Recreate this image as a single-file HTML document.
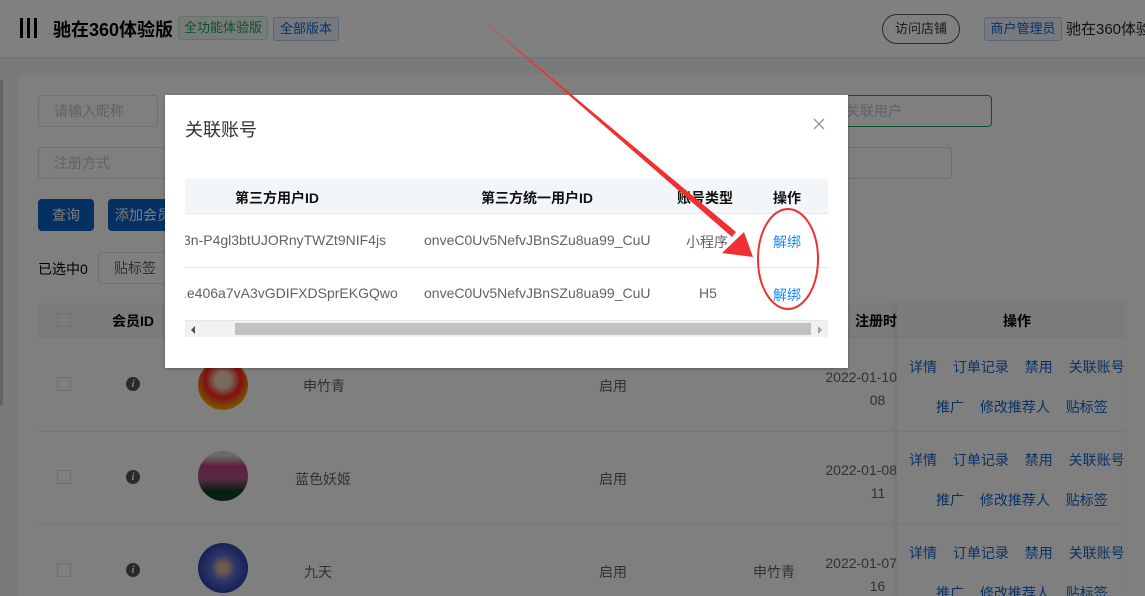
<!DOCTYPE html>
<html style="width:1145px;height:596px;overflow:hidden"><head><meta charset="utf-8">
<style>
*{margin:0;padding:0;box-sizing:border-box}
body{width:1145px;height:596px;overflow:hidden;position:relative;background:#787a7b;font-family:"Liberation Sans","Noto Sans CJK SC",sans-serif;font-size:14px;color:#303133}
.abs{position:absolute}
.hdr{left:0;top:0;width:1145px;height:58px;background:#808080;border-bottom:1px solid #737373}
.card{left:18px;top:75px;width:1127px;height:521px;background:#7f7f7f}
.inp{border:1px solid #6e6f73;border-radius:4px;color:#606266;font-size:14px;padding-left:15px}
.btn{background:#053062;color:#7f7f7f;border-radius:4px;text-align:center;line-height:32px}
.blue{color:#0a3264}
.modal{left:165px;top:95px;width:683px;height:273px;background:#fff;box-shadow:0 1px 3px rgba(0,0,0,.3)}
.mt{position:absolute;overflow:hidden;left:20px;top:84px;width:643px;height:158px;color:#606266}
.cell{position:absolute;white-space:nowrap;text-align:center}
.nw{white-space:nowrap}
</style></head><body>
<div class="abs hdr"></div>
<div class="abs" style="left:20px;top:18px;width:3px;height:20px;background:#000"></div>
<div class="abs" style="left:27px;top:18px;width:3px;height:20px;background:#000"></div>
<div class="abs" style="left:34px;top:18px;width:3px;height:20px;background:#000"></div>
<div class="abs nw" style="left:53px;top:16px;font-size:18px;font-weight:bold;color:#000">驰在360体验版</div>
<div class="abs" style="left:178px;top:16px;width:90px;height:24px;border:1px solid #617368;background:#777c79;color:#0c502c;border-radius:3px;font-size:13px;text-align:center;line-height:22px">全功能体验版</div>
<div class="abs" style="left:273px;top:17px;width:66px;height:24px;border:1px solid #596878;background:#767a7e;color:#0a3264;border-radius:3px;font-size:13px;text-align:center;line-height:22px">全部版本</div>
<div class="abs" style="left:882px;top:14px;width:78px;height:30px;border:1px solid #2a2a2a;border-radius:15px;text-align:center;line-height:28px;font-size:13px;color:#1a1a1a">访问店铺</div>
<div class="abs" style="left:984px;top:17px;width:78px;height:24px;border:1px solid #596878;background:#767a7e;color:#0a3264;border-radius:3px;font-size:13px;text-align:center;line-height:22px">商户管理员</div>
<div class="abs nw" style="left:1066px;top:18px;font-size:15px;color:#111">驰在360体验版</div>
<div class="abs" style="left:0;top:80px;width:3px;height:325px;background:#646464"></div>
<div class="abs card"></div>
<div class="abs inp" style="left:38px;top:95px;width:120px;height:32px;line-height:30px">请输入昵称</div>
<div class="abs inp" style="left:835px;top:95px;width:157px;height:32px;line-height:30px;border-color:#0c502c;padding-left:10px">关联用户</div>
<div class="abs inp" style="left:38px;top:147px;width:130px;height:32px;line-height:30px">注册方式</div>
<div class="abs inp" style="left:835px;top:147px;width:117px;height:32px"></div>
<div class="abs btn" style="left:38px;top:199px;width:56px;height:32px">查询</div>
<div class="abs btn" style="left:108px;top:199px;width:70px;height:32px">添加会员</div>
<div class="abs" style="left:38px;top:259px;color:#000">已选中0</div>
<div class="abs inp" style="left:98px;top:252px;width:80px;height:32px;line-height:30px;color:#303133">贴标签</div>
<div class="abs" style="left:38px;top:303px;width:1088px;height:35px;background:#7a7b7d;border-bottom:1px solid #75777a"></div>
<div class="abs" style="left:57px;top:313px;width:14px;height:14px;border:1px solid #6e6f73"></div>
<div class="abs" style="left:112px;top:311px;font-weight:bold;color:#000">会员ID</div>
<div class="abs" style="left:855px;top:311px;font-weight:bold;color:#000">注册时</div>
<div class="abs" style="left:897px;top:303px;width:229px;height:293px;background:#7f7f7f;box-shadow:-2px 0 4px rgba(0,0,0,.08)"></div>
<div class="abs" style="left:897px;top:303px;width:229px;height:35px;background:#7a7b7d;border-bottom:1px solid #75777a"></div>
<div class="abs" style="left:1003px;top:311px;font-weight:bold;color:#000">操作</div>

<div class="abs" style="left:38px;top:431px;width:1088px;height:1px;background:#75777a"></div>
<div class="abs" style="left:38px;top:524px;width:1088px;height:1px;background:#75777a"></div>

<div class="abs" style="left:57px;top:377px;width:14px;height:14px;border:1px solid #6e6f73"></div>
<div class="abs" style="left:57px;top:470px;width:14px;height:14px;border:1px solid #6e6f73"></div>
<div class="abs" style="left:57px;top:563px;width:14px;height:14px;border:1px solid #6e6f73"></div>
<div class="abs" style="left:126px;top:377px;width:14px;height:14px;border-radius:50%;background:#2a2a2a;color:#808080;font:italic bold 11px 'Liberation Serif',serif;text-align:center;line-height:14px">i</div>
<div class="abs" style="left:126px;top:470px;width:14px;height:14px;border-radius:50%;background:#2a2a2a;color:#808080;font:italic bold 11px 'Liberation Serif',serif;text-align:center;line-height:14px">i</div>
<div class="abs" style="left:126px;top:563px;width:14px;height:14px;border-radius:50%;background:#2a2a2a;color:#808080;font:italic bold 11px 'Liberation Serif',serif;text-align:center;line-height:14px">i</div>
<div class="abs" style="left:198px;top:360px;width:50px;height:50px;border-radius:50%;background:radial-gradient(circle at 50% 40%,#7a6a58 20%,#801010 45%,#7a5800 75%)"></div>
<div class="abs" style="left:198px;top:451px;width:50px;height:50px;border-radius:50%;background:linear-gradient(#6a6a6a 10%,#602040 30%,#582848 55%,#082010 80%)"></div>
<div class="abs" style="left:198px;top:543px;width:50px;height:50px;border-radius:50%;background:radial-gradient(circle,#705a50 12%,#303868 35%,#101850 80%)"></div>
<div class="abs" style="left:303px;top:376px">申竹青</div>
<div class="abs" style="left:295px;top:469px">蓝色妖姬</div>
<div class="abs" style="left:304px;top:562px">九天</div>
<div class="abs" style="left:599px;top:376px">启用</div>
<div class="abs" style="left:599px;top:469px">启用</div>
<div class="abs" style="left:599px;top:562px">启用</div>
<div class="abs" style="left:753px;top:562px">申竹青</div>
<div class="abs nw" style="left:797px;top:366px;text-align:right;width:100px;line-height:23px">2022-01-10<br>08&nbsp;&nbsp;&nbsp;</div>
<div class="abs nw" style="left:797px;top:459px;text-align:right;width:100px;line-height:23px">2022-01-08<br>11&nbsp;&nbsp;&nbsp;</div>
<div class="abs nw" style="left:797px;top:552px;text-align:right;width:100px;line-height:23px">2022-01-07<br>16&nbsp;&nbsp;&nbsp;</div>
<div class="abs blue nw" style="left:909px;top:357px;word-spacing:12px">详情 订单记录 禁用 关联账号</div>
<div class="abs blue nw" style="left:936px;top:397px;word-spacing:12px">推广 修改推荐人 贴标签</div>
<div class="abs blue nw" style="left:909px;top:450px;word-spacing:12px">详情 订单记录 禁用 关联账号</div>
<div class="abs blue nw" style="left:936px;top:490px;word-spacing:12px">推广 修改推荐人 贴标签</div>
<div class="abs blue nw" style="left:909px;top:543px;word-spacing:12px">详情 订单记录 禁用 关联账号</div>
<div class="abs blue nw" style="left:936px;top:583px;word-spacing:12px">推广 修改推荐人 贴标签</div>

<div class="abs modal">
 <div class="abs" style="left:20px;top:21px;font-size:18px;color:#303133">关联账号</div>
 <svg class="abs" style="left:648px;top:23px" width="12" height="12"><path d="M1 1L11 11M11 1L1 11" stroke="#909399" stroke-width="1.3"/></svg>
 <div class="mt">
  <div class="abs" style="left:0;top:0;width:643px;height:35px;background:#f3f6f9;border-bottom:1px solid #e4e8ee"></div>
  <div class="abs" style="left:0;top:88px;width:643px;height:1px;background:#e4e8ee"></div>
  <div class="abs" style="left:0;top:141px;width:643px;height:1px;background:#e4e8ee"></div>
  <div class="cell" style="left:50px;top:9px;font-weight:bold;color:#111">第三方用户ID</div>
  <div class="cell" style="left:296px;top:9px;font-weight:bold;color:#111">第三方统一用户ID</div>
  <div class="cell" style="left:492px;top:9px;font-weight:bold;color:#111">账号类型</div>
  <div class="cell" style="left:588px;top:9px;font-weight:bold;color:#111">操作</div>
  <div class="cell" style="left:-2px;top:53px">3n-P4gl3btUJORnyTWZt9NIF4js</div>
  <div class="cell" style="left:-2px;top:106px">.e406a7vA3vGDIFXDSprEKGQwo</div>
  <div class="cell" style="left:239px;top:53px">onveC0Uv5NefvJBnSZu8ua99_CuU</div>
  <div class="cell" style="left:239px;top:106px">onveC0Uv5NefvJBnSZu8ua99_CuU</div>
  <div class="cell" style="left:501px;top:53px">小程序</div>
  <div class="cell" style="left:514px;top:106px">H5</div>
  <div class="cell" style="left:588px;top:53px;color:#1989fa">解绑</div>
  <div class="cell" style="left:588px;top:106px;color:#1989fa">解绑</div>
  <div class="abs" style="left:0;top:142px;width:643px;height:16px;background:#f1f1f1"></div>
  <div class="abs" style="left:50px;top:144px;width:576px;height:12px;background:#c1c1c1"></div>
  <svg class="abs" style="left:4px;top:146px" width="8" height="10"><path d="M2 5L6 1V9Z" fill="#505050"/></svg>
  <svg class="abs" style="left:631px;top:146px" width="8" height="10"><path d="M6 5L2 1V9Z" fill="#a0a0a0"/></svg>
 </div>
</div>

<svg class="abs" style="left:0;top:0" width="1145" height="596">
 <path d="M479 17 L736 232 L732 237Z" fill="#f03030"/>
 <path d="M753 257 L722 253 L744 232Z" fill="#f03030"/>
 <ellipse cx="788" cy="259" rx="30" ry="50" fill="none" stroke="#f03030" stroke-width="2"/>
</svg>
</body></html>
